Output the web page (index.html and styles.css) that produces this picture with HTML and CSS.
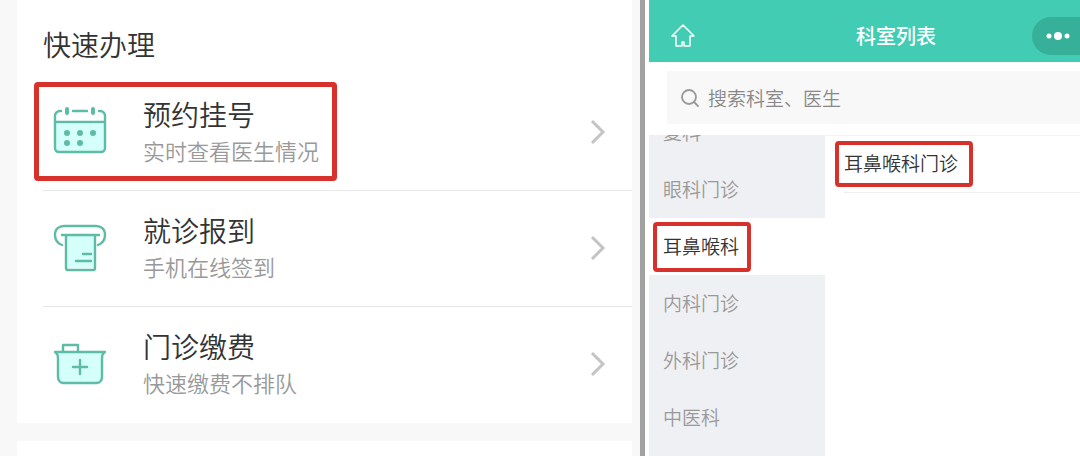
FILE: index.html
```html
<!DOCTYPE html>
<html lang="zh-CN">
<head>
    <meta charset="utf-8">
    <title>预约挂号</title>
    <link rel="stylesheet" href="styles.css">
</head>
<body>
    <div class="page">
        <section class="home">
            <div class="card">
                <h2>快速办理</h2>
                <a class="row" href="#">
                    <svg class="row-icon" viewBox="0 0 54 54">
                        <path class="fill" d="M2 19h50v24a4 4 0 0 1-4 4H6a4 4 0 0 1-4-4z"/>
                        <path d="M8 6H7a5 5 0 0 0-5 5v32a4 4 0 0 0 4 4h42a4 4 0 0 0 4-4V11a5 5 0 0 0-5-5h-1M20 6h14M2 17h50"/>
                        <path class="pin" d="M14 4v4M40 4v4"/>
                        <g class="dots"><circle cx="14" cy="28" r="3"/><circle cx="27" cy="28" r="3"/><circle cx="40" cy="28" r="3"/><circle cx="14" cy="38" r="3"/><circle cx="27" cy="38" r="3"/></g>
                    </svg>
                    <span class="row-text">
                        <span class="row-title">预约挂号</span>
                        <span class="row-desc">实时查看医生情况</span>
                    </span>
                    <svg class="arrow" viewBox="0 0 16 26"><path d="M2 2l11 11L2 24"/></svg>
                    <span class="mark mark-row"></span>
                </a>
                <a class="row" href="#">
                    <svg class="row-icon" viewBox="0 0 54 54">
                        <path class="fill" d="M13 14h29v33H13z"/>
                        <path d="M9 24C4 22 2 19 2 14c0-6 4-9 9-9h32c5 0 9 3 9 9 0 5-2 8-7 10"/>
                        <path d="M13 14v33a2 2 0 0 0 2 2h25a2 2 0 0 0 2-2V14M9 14h37M30 33h8M23 40h15"/>
                    </svg>
                    <span class="row-text">
                        <span class="row-title">就诊报到</span>
                        <span class="row-desc">手机在线签到</span>
                    </span>
                    <svg class="arrow" viewBox="0 0 16 26"><path d="M2 2l11 11L2 24"/></svg>
                </a>
                <a class="row" href="#">
                    <svg class="row-icon" viewBox="0 0 54 54">
                        <path class="fill" d="M2 15h50c-3 2-3 4-3 8v17c0 3-2 6-5 6H10c-3 0-5-3-5-6V23c0-4 0-6-3-8z"/>
                        <path d="M2 15h50c-3 2-3 4-3 8v17c0 3-2 6-5 6H10c-3 0-5-3-5-6V23c0-4 0-6-3-8zM10 15V8h15v7M27 23v14M20 30h14"/>
                    </svg>
                    <span class="row-text">
                        <span class="row-title">门诊缴费</span>
                        <span class="row-desc">快速缴费不排队</span>
                    </span>
                    <svg class="arrow" viewBox="0 0 16 26"><path d="M2 2l11 11L2 24"/></svg>
                </a>
            </div>
            <div class="card"></div>
        </section>

        <section class="depts">
            <header>
                <a class="home-link" href="#" aria-label="首页">
                    <svg viewBox="0 0 24 24"><path d="M12 1L1 12h4v10h6v-4h2v4h6V12h4z"/></svg>
                </a>
                <h1>科室列表</h1>
                <button class="more" type="button" aria-label="更多">
                    <svg viewBox="0 0 24 10"><circle cx="3" cy="5" r="2.5"/><circle cx="12" cy="5" r="4"/><circle cx="21" cy="5" r="2.5"/></svg>
                </button>
            </header>
            <div class="search">
                <label for="search-input" aria-label="搜索">
                    <svg viewBox="0 0 20 20"><circle cx="9" cy="9" r="7"/><path d="M14 14l4 4"/></svg>
                </label>
                <input type="text" id="search-input" placeholder="搜索科室、医生">
            </div>
            <div class="columns">
                <nav>
                    <button type="button">复科</button>
                    <button type="button">眼科门诊</button>
                    <button type="button" class="active">耳鼻喉科<span class="mark mark-dept"></span></button>
                    <button type="button">内科门诊</button>
                    <button type="button">外科门诊</button>
                    <button type="button">中医科</button>
                </nav>
                <div class="clinics">
                    <a href="#">耳鼻喉科门诊<span class="mark mark-clinic"></span></a>
                </div>
            </div>
        </section>
    </div>
</body>
</html>
```
FILE: styles.css
```css
* {
    box-sizing: border-box;
}
body {
    margin: 0;
    font-family: "Noto Sans CJK SC", sans-serif;
    font-weight: 350;
    color: #333;
    background-color: #fff;
}
a {
    color: inherit;
    text-decoration: none;
}
button,
input {
    font-family: inherit;
    font-weight: inherit;
    border: 0;
}
svg {
    display: block;
    fill: none;
    stroke-linecap: round;
    stroke-linejoin: round;
}
.page {
    display: flex;
    height: 100vh;
    overflow: hidden;
}

/* left: quick actions */
.home {
    flex: 0 0 60%;
    display: flex;
    flex-direction: column;
    gap: 18px;
    max-width: 645px;
    padding: 0 8px 0 17px;
    background-color: #f8f8f8;
    border-right: 5px solid #a1a1a1;
}
.card {
    padding-left: 26px;
    background-color: #fff;
}
.card:last-child {
    flex: 1;
}
.card h2 {
    margin: 0;
    padding: 24px 0 11px;
    font-size: 28px;
    font-weight: inherit;
    line-height: 40px;
}
.row {
    position: relative;
    display: flex;
    align-items: center;
    height: 116px;
    padding: 0 26px 2px 10px;
    border-bottom: 1px solid #e8e8e8;
}
.row:last-child {
    border-bottom: 0;
}
.row-icon {
    width: 54px;
    height: 54px;
    stroke: #5dbba6;
    stroke-width: 2.4;
}
.row-icon .fill {
    fill: #d5fffa;
    stroke: none;
}
.row-icon .pin {
    stroke-width: 4;
}
.row-icon .dots {
    fill: #5dbba6;
    stroke: none;
}
.row-text {
    flex: 1;
    margin-left: 36px;
}
.row-title,
.row-desc {
    display: block;
    line-height: 36px;
}
.row-title {
    font-size: 28px;
}
.row-desc {
    font-size: 22px;
    color: #999;
}
.arrow {
    width: 16px;
    height: 26px;
    stroke: #c4c4c4;
    stroke-width: 3;
    stroke-linecap: butt;
    stroke-linejoin: miter;
}

/* red highlight frames */
.mark {
    position: absolute;
    border: 4px solid #d6322b;
    border-radius: 4px;
    pointer-events: none;
}
.mark-row {
    top: 7px;
    left: -9px;
    width: 303px;
    height: 99px;
    border-width: 5px;
}
.mark-dept {
    top: 4px;
    left: 4px;
    width: 98px;
    height: 50px;
}
.mark-clinic {
    top: 5px;
    left: -9px;
    width: 138px;
    height: 46px;
}

/* right: department list */
.depts {
    flex: 1;
    display: flex;
    flex-direction: column;
    min-width: 0;
    padding-left: 4px;
}
header {
    display: flex;
    align-items: center;
    height: 62px;
    padding: 10px 0 0 22px;
    color: #fff;
    background-color: #42ccb3;
}
.home-link svg {
    width: 24px;
    height: 24px;
    stroke: #fff;
    stroke-width: 1.5;
}
header h1 {
    flex: 1;
    margin: 0;
    padding-left: 65px;
    font-size: 20px;
    font-weight: 500;
    line-height: 30px;
    text-align: center;
}
.more {
    width: 48px;
    height: 38px;
    padding: 0 0 0 14px;
    background-color: #37b099;
    border-radius: 19px 0 0 19px;
}
.more svg {
    width: 24px;
    height: 10px;
    fill: #fff;
}
.search {
    display: flex;
    align-items: center;
    gap: 8px;
    height: 53px;
    margin: 9px 0 11px 18px;
    padding-left: 13px;
    background-color: #f8f8f8;
}
.search svg {
    width: 20px;
    height: 20px;
    stroke: #999;
    stroke-width: 1.8;
}
.search input {
    flex: 1;
    min-width: 0;
    padding: 0;
    font-size: 19px;
    line-height: 30px;
    background: none;
    outline: 0;
}
.search input::placeholder {
    color: #888;
}
.columns {
    flex: 1;
    display: flex;
    min-height: 0;
    overflow: hidden;
}
nav {
    flex: 0 0 176px;
    display: flex;
    flex-direction: column;
    justify-content: flex-end;
    padding-bottom: 10px;
    background-color: #eff0f4;
}
nav button {
    position: relative;
    flex: none;
    height: 57px;
    padding: 0 0 3px 14px;
    font-size: 19px;
    text-align: left;
    color: #999;
    background: none;
}
nav .active {
    color: #333;
    background-color: #fff;
}
.clinics {
    flex: 1;
    padding-left: 19px;
    border-top: 1px solid #f4f4f4;
}
.clinics a {
    position: relative;
    display: block;
    padding-bottom: 3px;
    font-size: 19px;
    line-height: 53px;
    border-bottom: 1px solid #eee;
}
```
